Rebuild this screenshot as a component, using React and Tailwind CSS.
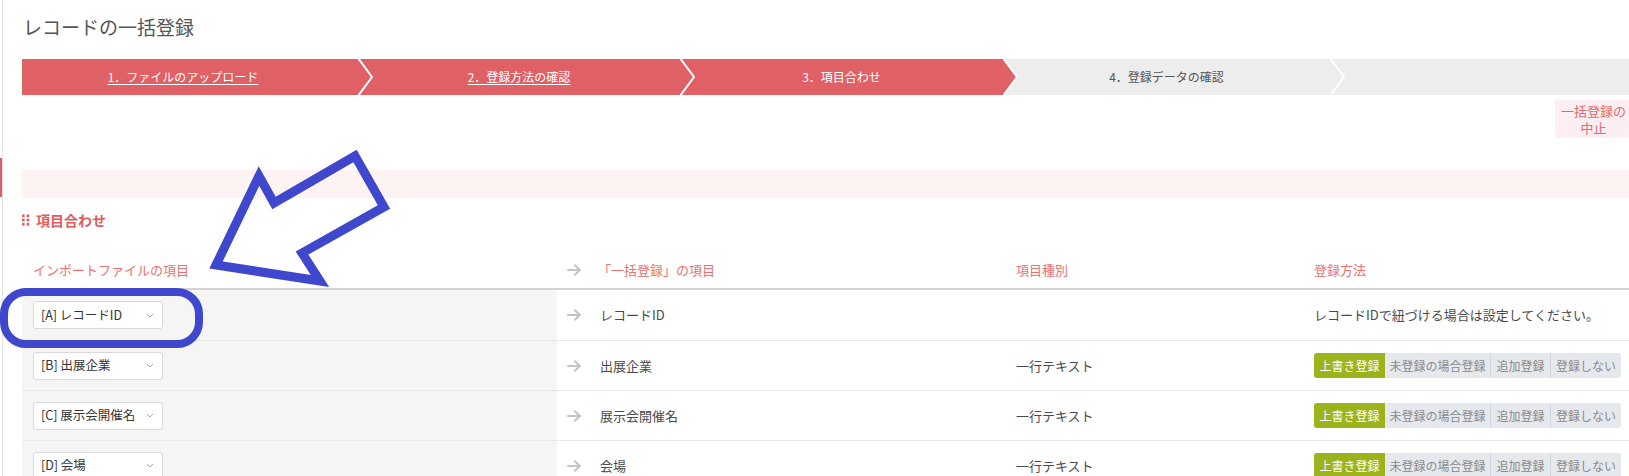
const STEPS = [
  { label: "1．ファイルのアップロード", box: "w-[336px] pr-[14px] bg-[#df6065] text-white", link: true, fill: "#df6065" },
  { label: "2．登録方法の確認", box: "w-[322px] bg-[#df6065] text-white", link: true, fill: "#df6065" },
  { label: "3．項目合わせ", box: "w-[323px] bg-[#df6065] text-white", link: false, fill: "#df6065" },
  { label: "4．登録データの確認", box: "w-[327px] bg-[#ededed] text-[#555]", link: false, fill: "#ededed" },
  { label: "", box: "flex-1 bg-[#ededed]", link: false, fill: null },
];

const ROWS = [
  { src: "[A] レコードID", dst: "レコードID", type: "", note: "レコードIDで紐づける場合は設定してください。", h: "h-[51px]" },
  { src: "[B] 出展企業", dst: "出展企業", type: "一行テキスト", h: "h-[50px]" },
  { src: "[C] 展示会開催名", dst: "展示会開催名", type: "一行テキスト", h: "h-[50px]" },
  { src: "[D] 会場", dst: "会場", type: "一行テキスト", h: "h-[50px]" },
];

function Arrow() {
  return (
    <svg width="14" height="12" viewBox="0 0 14 12" fill="none">
      <path d="M1 6H13M8 1.2L12.8 6L8 10.8" stroke="#c4c4c4" strokeWidth="2" strokeLinecap="round" strokeLinejoin="round" />
    </svg>
  );
}

function Step({ step }) {
  return (
    <div className={`relative h-full flex items-center justify-center text-[12px] ${step.box}`}>
      <span className={step.link ? "underline underline-offset-2" : ""}>{step.label}</span>
      {step.fill && (
        <svg className="absolute left-full top-0 z-10" width="15" height="36" viewBox="0 0 15 36">
          <polygon points="0,0 14,18 0,36" fill={step.fill} />
          <polyline points="0,-1 14,18 0,37" fill="none" stroke="#fff" strokeWidth="2" />
        </svg>
      )}
    </div>
  );
}

function SelectBox({ value }) {
  return (
    <div className="w-[130px] h-[28px] bg-white border border-[#d9d9d9] rounded-[3px] flex items-center justify-between pl-[7px] pr-[8px] text-[12.5px] text-[#333]">
      <span className="whitespace-nowrap">{value}</span>
      <svg width="8" height="5" viewBox="0 0 8 5" fill="none">
        <path d="M1 1L4 4L7 1" stroke="#aaa" strokeWidth="1" />
      </svg>
    </div>
  );
}

function MethodButtons() {
  return (
    <div className="flex h-[25px] rounded-[3px] overflow-hidden text-[12px]">
      <div className="w-[71px] flex items-center justify-center bg-[#9cb31c] text-white">上書き登録</div>
      <div className="w-[105px] flex items-center justify-center bg-[#e5e9ed] text-[#8a8a8a]">未登録の場合登録</div>
      <div className="w-[60px] flex items-center justify-center bg-[#e5e9ed] text-[#8a8a8a] border-l border-[#d3d8dd]">追加登録</div>
      <div className="w-[71px] flex items-center justify-center bg-[#e5e9ed] text-[#8a8a8a] border-l border-[#d3d8dd]">登録しない</div>
    </div>
  );
}

export default function App() {
  return (
    <div className="relative w-[1629px] h-[476px] overflow-hidden bg-white flex font-['Noto_Sans_CJK_JP','Liberation_Sans',sans-serif]">
      <div className="w-[3px] shrink-0 border-r border-[#e3e3e3]">
        <div className="mt-[158px] h-[39px] w-[2px] bg-[#e06065]" />
      </div>

      <div className="ml-[19px] w-[1610px] shrink-0">
        <h1 className="pt-[13px] h-[41px] leading-[28px] text-[19px] text-[#555] ml-[1px] font-normal">
          レコードの一括登録
        </h1>

        <div className="mt-[18px] h-[36px] flex">
          {STEPS.map((s, i) => (
            <Step key={i} step={s} />
          ))}
        </div>

        <div className="flex justify-end mt-[5px]">
          <div className="w-[77px] h-[38px] bg-[#fdeef4] rounded-[2px] flex flex-col items-center justify-center text-[13px] leading-[17px] text-[#e36a6a]">
            <span>一括登録の</span>
            <span>中止</span>
          </div>
        </div>

        <div className="mt-[32px] h-[28px] bg-[#fdf3f3]" />

        <div className="mt-[12px] h-[20px] flex items-center gap-[6px] text-[14px] font-bold text-[#e05a5e]">
          <svg width="8" height="12" viewBox="0 0 8 12">
            <rect x="0" y="0.5" width="2.6" height="2.6" fill="#e05a5e" />
            <rect x="4.6" y="0.5" width="2.6" height="2.6" fill="#e05a5e" />
            <rect x="0" y="4.7" width="2.6" height="2.6" fill="#e05a5e" />
            <rect x="4.6" y="4.7" width="2.6" height="2.6" fill="#e05a5e" />
            <rect x="0" y="8.9" width="2.6" height="2.6" fill="#e05a5e" />
            <rect x="4.6" y="8.9" width="2.6" height="2.6" fill="#e05a5e" />
          </svg>
          <span>項目合わせ</span>
        </div>

        <div className="mt-[22px] h-[38px] border-b-2 border-[#d3d3d3] grid grid-cols-[535px_43px_416px_298px_1fr] items-center text-[13px] text-[#e8726f]">
          <div className="pl-[11px]">インポートファイルの項目</div>
          <div className="pl-[10px] flex">
            <Arrow />
          </div>
          <div className="-ml-[2px]">「一括登録」の項目</div>
          <div>項目種別</div>
          <div>登録方法</div>
        </div>

        {ROWS.map((r, i) => (
          <div
            key={i}
            className={`${r.h} border-b border-[#e8e8e8] grid grid-cols-[535px_43px_416px_298px_1fr] items-stretch text-[13px] text-[#4a4a4a]`}
          >
            <div className="bg-[#f5f5f5] pl-[11px] flex items-center">
              <SelectBox value={r.src} />
            </div>
            <div className="pl-[10px] flex items-center">
              <Arrow />
            </div>
            <div className="flex items-center">{r.dst}</div>
            <div className="flex items-center">{r.type}</div>
            <div className="flex items-center">
              {r.note ? <span>{r.note}</span> : <MethodButtons />}
            </div>
          </div>
        ))}
      </div>

      <svg className="absolute left-0 top-0 pointer-events-none" width="1629" height="476" viewBox="0 0 1629 476">
        <polygon
          points="216,265 259,176 274,203 355,156 384,207 302,253 320,281"
          fill="none"
          stroke="#3f48cc"
          strokeWidth="9"
          strokeLinejoin="miter"
        />
        <rect x="4" y="292" width="195" height="52" rx="22" fill="none" stroke="#3f48cc" strokeWidth="8" />
      </svg>
    </div>
  );
}
